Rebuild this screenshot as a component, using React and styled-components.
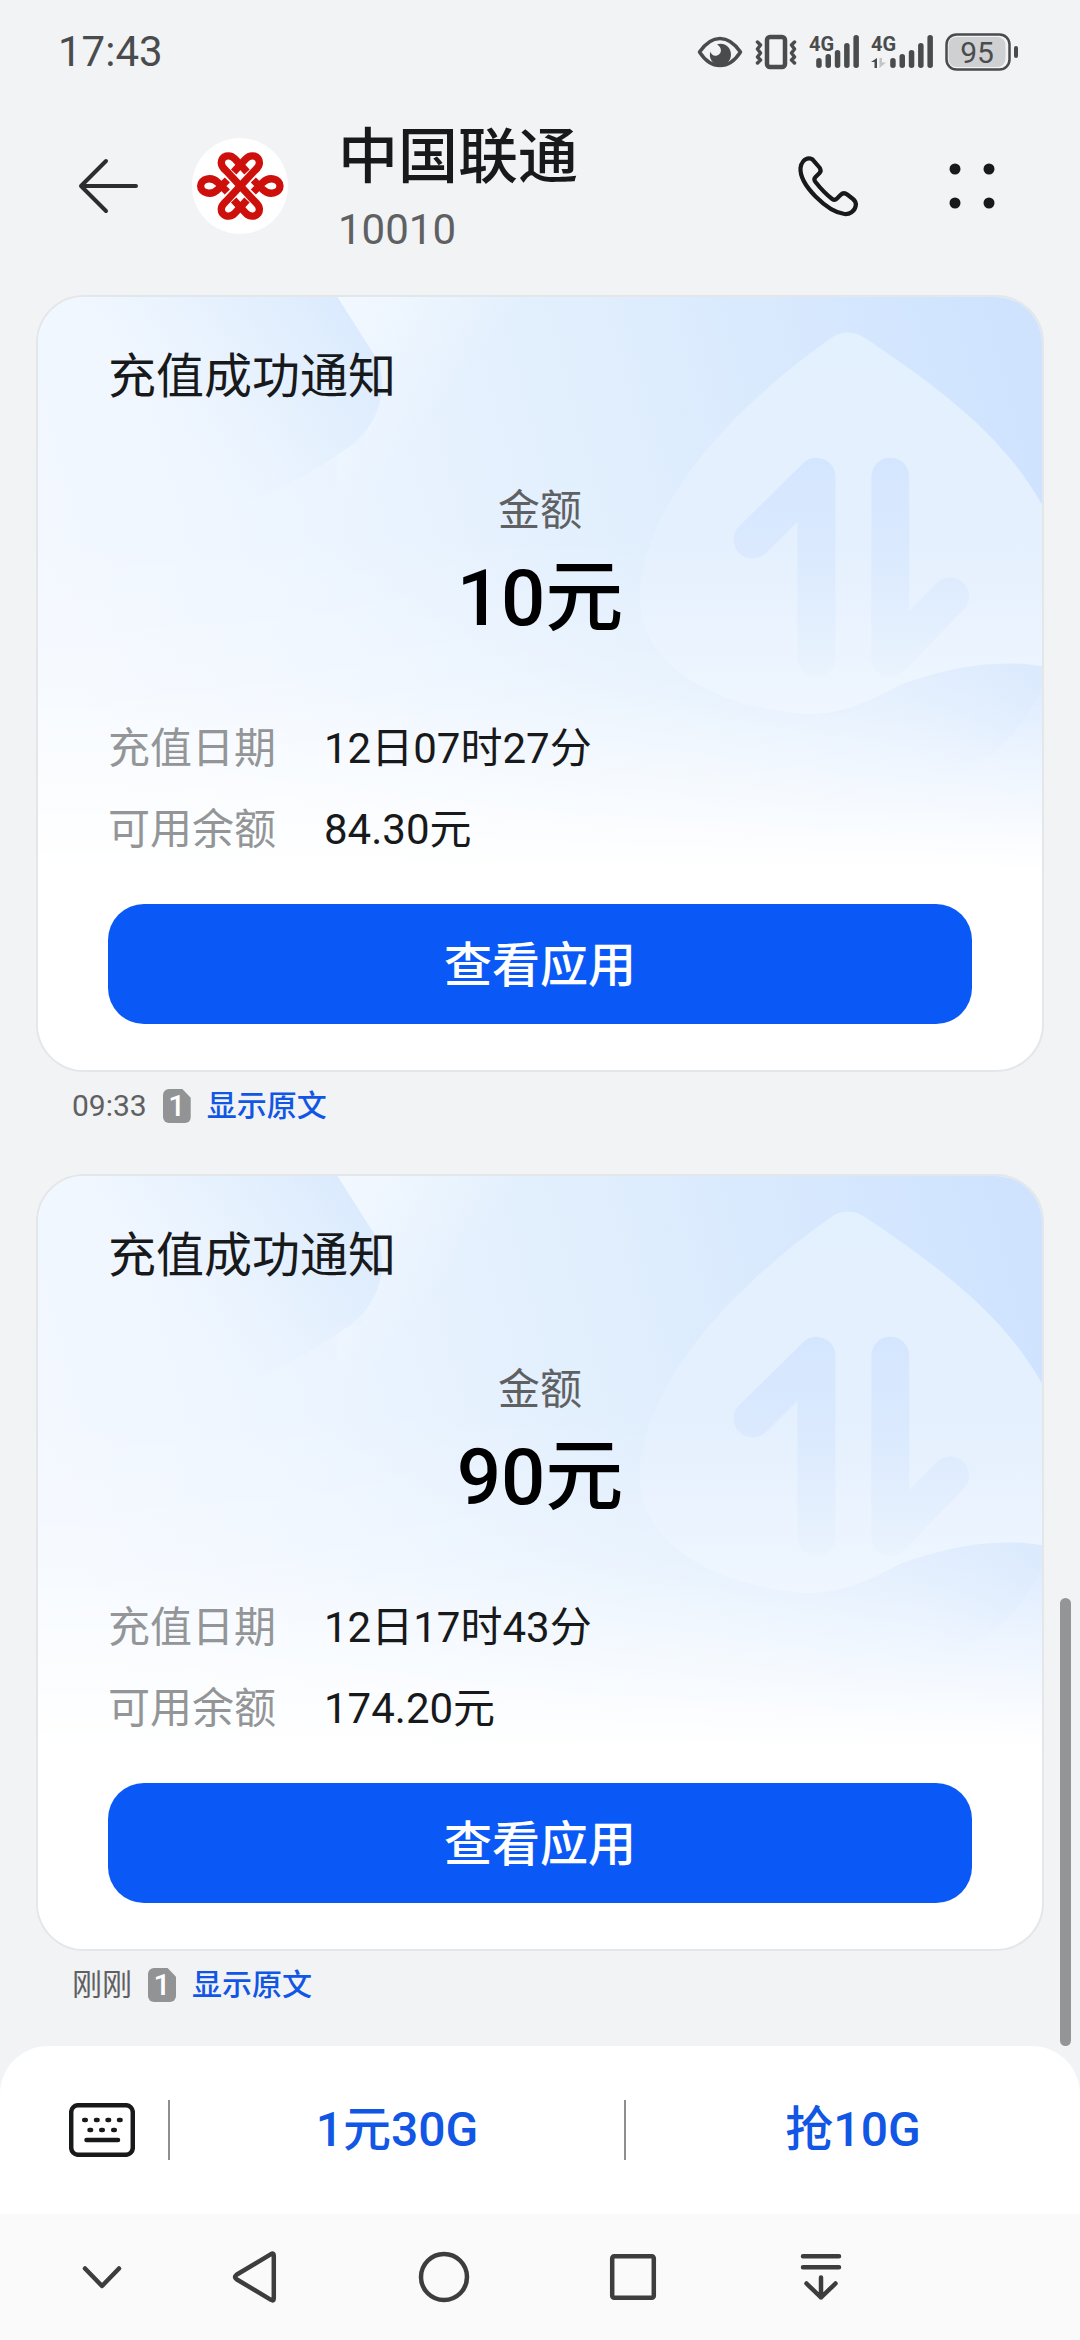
import React from "react";
import styled, { createGlobalStyle } from "styled-components";

const color = {
  page: "#f1f3f5",
  surface: "#ffffff",
  nav: "#fafafa",
  ink: "#18191b",
  status: "#4a4b4d",
  navInk: "#3d3d3d",
  muted: "#5f6062",
  label: "#939597",
  link: "#1156e4",
  brand: "#0a59f7",
};

const GlobalStyle = createGlobalStyle`
  * { box-sizing: border-box; }
  body {
    margin: 0;
    background: ${color.page};
    color: ${color.ink};
    font-family: Roboto, "Noto Sans CJK SC", sans-serif;
  }
  h1, p, dl, dd { margin: 0; }
  button {
    border: 0;
    padding: 0;
    background: none;
    color: inherit;
    font: inherit;
    cursor: pointer;
  }
  svg { display: block; }
`;

const Page = styled.div`
  display: flex;
  flex-direction: column;
  min-height: 100vh;
`;

const StatusBar = styled.div`
  display: flex;
  align-items: center;
  justify-content: space-between;
  height: 104px;
  padding: 0 62px 0 58px;
  color: ${color.status};
`;

const Clock = styled.time`
  font-size: 42px;
  line-height: 56px;
`;

const StatusIcons = styled.div`
  display: flex;
  align-items: center;
  gap: 12px;
`;

const Header = styled.header`
  display: flex;
  align-items: center;
  height: 164px;
  padding: 0 66px;
`;

const IconButton = styled.button`
  display: flex;
  align-items: center;
  justify-content: center;
  width: 84px;
  height: 84px;
`;

const Avatar = styled.div`
  width: 96px;
  height: 96px;
  margin: 0 50px 0 42px;
  border-radius: 50%;
  background: ${color.surface};
`;

const Contact = styled.div`
  flex: 1;
  padding-top: 8px;
`;

const ContactName = styled.h1`
  font-size: 60px;
  font-weight: 500;
  line-height: 80px;
`;

const ContactNumber = styled.p`
  font-size: 42px;
  line-height: 64px;
  color: ${color.muted};
`;

const HeaderActions = styled.div`
  display: flex;
  gap: 60px;
`;

const Thread = styled.main`
  position: relative;
  flex: 1;
  display: flex;
  flex-direction: column;
  gap: 48px;
  padding: 27px 36px 36px;
`;

const ScrollThumb = styled.div`
  position: absolute;
  right: 9px;
  bottom: 0;
  width: 11px;
  height: 448px;
  border-radius: 6px;
  background: #949597;
`;

const Card = styled.section`
  position: relative;
  overflow: hidden;
  padding: 48px 70px 46px;
  border: 2px solid #e4e7ea;
  border-radius: 48px;
  background: ${color.surface};
  background-clip: padding-box;
`;

const CardArt = styled.svg`
  position: absolute;
  top: 0;
  left: 0;
  width: 100%;
  height: auto;
`;

const CardBody = styled.div`
  position: relative;
`;

const CardTitle = styled.p`
  font-size: 48px;
  line-height: 64px;
`;

const Summary = styled.div`
  margin: 74px 0;
  text-align: center;
`;

const SummaryLabel = styled.p`
  font-size: 42px;
  line-height: 56px;
  color: ${color.muted};
`;

const Amount = styled.p`
  margin-top: 12px;
  font-size: 78px;
  font-weight: 500;
  line-height: 96px;
  color: #000;
`;

const Details = styled.dl`
  display: grid;
  grid-template-columns: auto 1fr;
  gap: 25px 48px;
  margin-bottom: 46px;
  font-size: 42px;
  line-height: 56px;
`;

const DetailLabel = styled.dt`
  color: ${color.label};
`;

const CardButton = styled.button`
  width: 100%;
  height: 120px;
  padding-bottom: 6px;
  border-radius: 36px;
  background: ${color.brand};
  color: #fff;
  font-size: 48px;
  font-weight: 500;
`;

const Meta = styled.div`
  display: flex;
  align-items: center;
  gap: 16px;
  height: 40px;
  margin-top: 14px;
  padding-left: 36px;
  font-size: 30px;
  line-height: 40px;
  color: ${color.muted};
`;

const SimBadge = styled.span`
  width: 28px;
  height: 34px;
  border-radius: 6px;
  background: #929395;
  clip-path: polygon(0 0, 70% 0, 100% 26%, 100% 100%, 0 100%);
  color: #fff;
  font-size: 30px;
  font-weight: 500;
  line-height: 34px;
  text-align: center;
`;

const OriginalLink = styled.a`
  color: ${color.link};
  font-weight: 500;
  text-decoration: none;
`;

const Composer = styled.div`
  display: flex;
  align-items: center;
  height: 168px;
  padding-left: 36px;
  border-radius: 48px 48px 0 0;
  background: ${color.surface};
`;

const KeyboardButton = styled(IconButton)`
  width: 132px;
`;

const QuickAction = styled.button`
  flex: 1;
  height: 60px;
  border-left: 2px solid #8f8f8f;
  color: ${color.link};
  font-size: 48px;
  font-weight: 500;
  line-height: 60px;
`;

const NavBar = styled.nav`
  display: flex;
  align-items: center;
  height: 126px;
  padding: 0 165px 0 42px;
  background: ${color.nav};
  color: ${color.navInk};
`;

const NavButton = styled.button`
  display: flex;
  align-items: center;
  justify-content: center;
  flex: ${(p) => (p.$fixed ? "0 0 120px" : "1")};
  height: 84px;
`;

function EyeIcon() {
  return (
    <svg width="46" height="36" viewBox="0 0 46 36" fill="none">
      <path d="M2.5 18C8 10 15 4.500 23 4.500S38 10 43.500 18C38 26.500 31 31.500 23 31.500S8 26.500 2.500 18Z" stroke="currentColor" strokeWidth="3.500" strokeLinejoin="round" />
      <path d="M20 10.500C27 8 34 13 34 20.500C34 27 29 31 23 31C16 31 11 24 13.500 17.500C14 20.500 17 22.500 20 21.500C25 20 25.500 13.500 20 10.500Z" fill="currentColor" />
    </svg>
  );
}

function VibrateIcon() {
  return (
    <svg width="42" height="36" viewBox="0 0 42 36" fill="none" stroke="currentColor" strokeLinecap="round" strokeLinejoin="round">
      <rect x="12" y="3" width="18" height="30" rx="3" strokeWidth="4.500" />
      <path d="M2.500 8L5.500 11L2.500 15L5.500 19L2.500 23L5.500 26L2.500 29M39.500 8L36.500 11L39.500 15L36.500 19L39.500 23L36.500 26L39.500 29" strokeWidth="3.500" />
    </svg>
  );
}

function SignalIcon({ data }) {
  const start = data ? 22 : 10;
  const tops = [24, 20, 16, 9, 1];
  const width = data ? 62 : 50;
  return (
    <svg width={width} height="48" viewBox={`0 -6 ${width} 48`} fill="currentColor">
      <text x="0" y="17" fontSize="20" fontWeight="700" fontFamily="Roboto, sans-serif">4G</text>
      {tops.map((top, i) => (
        <rect key={top} x={start + i * 9.3 - 2.8} y={top} width="5.500" height={34 - top} rx="2.700" />
      ))}
      {data && <path d="M0 28L6 24V34H3.500V28Z" />}
      {data && <path d="M8.500 24H11V28.500H15L8.500 34Z" fill="#c3c4c6" />}
    </svg>
  );
}

function BatteryIcon() {
  return (
    <svg width="73" height="38" viewBox="0 0 73 38">
      <rect x="1.500" y="1.500" width="63" height="35" rx="10" fill="#f1f3f5" stroke="currentColor" strokeWidth="2.500" />
      <rect x="3.500" y="4" width="57" height="30" rx="8" fill="#cfd0d2" />
      <rect x="69" y="13" width="4" height="12" rx="2" fill="currentColor" />
      <text x="32" y="30" fontSize="30" textAnchor="middle" fill="currentColor" fontFamily="Roboto, sans-serif">95</text>
    </svg>
  );
}

function BackIcon() {
  return (
    <svg width="60" height="58" viewBox="0 0 60 58" fill="none" stroke="#2c2d2f" strokeWidth="4" strokeLinecap="round" strokeLinejoin="round">
      <path d="M28 4L3 29L28 54M3 29H58" />
    </svg>
  );
}

function UnicomLogo() {
  const knot =
    "M201 126L165 87C150 71 122 76 124 100C125 112 134 118 140 124L222 212C228 218 237 224 238 236C240 260 212 265 197 249L161 210";
  const loop = "M142 186L114 158C94 138 62 146 62 168C62 190 94 198 114 178L142 150";
  return (
    <svg width="96" height="96" viewBox="36 24 288 288" fill="none" stroke="#ce100c" strokeWidth="22">
      <path d={knot} />
      <path d={knot} transform="matrix(-1 0 0 1 362 0)" />
      <path d={loop} />
      <path d={loop} transform="matrix(-1 0 0 1 362 0)" />
    </svg>
  );
}

function PhoneIcon() {
  return (
    <svg width="64" height="64" viewBox="0 0 64 64" fill="none" stroke="currentColor" strokeWidth="4.200" strokeLinejoin="round">
      <path d="M4.500 14C5 9 8.500 4.300 13 4.300C15 4.300 16.200 4.800 17.300 6.300L23.500 13.500C25 15.500 25 17.500 23.300 19.300L19.500 23C18 24.500 18 26 19.300 27.800C24.500 34.500 29.500 40 36.200 45C38 46.300 39.500 46 41 44.500L44.500 41C46.500 39 49 38.800 51.200 40.500L57 45C59.500 47 60.500 49 59.700 52C58.500 57.500 53.500 60.500 48.500 60C31 57.500 3.500 31 4.500 14Z" />
    </svg>
  );
}

function MoreIcon() {
  return (
    <svg width="48" height="48" viewBox="0 0 48 48" fill="currentColor">
      <circle cx="7" cy="7" r="5.500" />
      <circle cx="41" cy="7" r="5.500" />
      <circle cx="7" cy="41" r="5.500" />
      <circle cx="41" cy="41" r="5.500" />
    </svg>
  );
}

function KeyboardIcon() {
  return (
    <svg width="66" height="54" viewBox="0 0 66 54" fill="none" stroke="currentColor" strokeWidth="4.500" strokeLinecap="round">
      <rect x="2.200" y="2.200" width="61.600" height="49.600" rx="7" />
      <path d="M15.200 17H16.800M27 17H28.600M38.500 17H40.100M50 17H51.600M20.500 27H22.100M32.200 27H33.800M44.200 27H45.800M17.500 37H49" />
    </svg>
  );
}

const navShapes = {
  hide: <path d="M9 17.500L26 35L43 17.500" />,
  back: <path d="M43.800 4.800V47.200Q43.800 50.500 41 48.900L6.500 28.200Q3.500 26 6.500 23.800L41 3.100Q43.800 1.500 43.800 4.800Z" />,
  home: <circle cx="26" cy="26" r="23" />,
  recent: <rect x="5.200" y="5.200" width="41.600" height="41.600" rx="2" />,
  drawer: <path d="M8 5.200H44M8 16.200H44M26 26.500V46.500M11.500 32.500L26 46.500L40.500 32.500" />,
};

function NavIcon({ shape }) {
  return (
    <svg width="52" height="52" viewBox="0 0 52 52" fill="none" stroke="currentColor" strokeWidth="4.500" strokeLinecap="round" strokeLinejoin="round">
      {navShapes[shape]}
    </svg>
  );
}

function RechargeArt({ id }) {
  const ref = (name) => `url(#${id}-${name})`;
  return (
    <CardArt viewBox="0 0 1006 776" aria-hidden="true">
      <defs>
        <linearGradient id={`${id}-base`} gradientUnits="userSpaceOnUse" x1="0" y1="260" x2="960" y2="0">
          <stop offset="0" stopColor="#f3f8ff" />
          <stop offset="0.250" stopColor="#edf5ff" />
          <stop offset="0.600" stopColor="#e0eefd" />
          <stop offset="1" stopColor="#cfe3ff" />
        </linearGradient>
        <linearGradient id={`${id}-fade`} x1="0" y1="0" x2="0" y2="1">
          <stop offset="0" stopColor="#fff" stopOpacity="0" />
          <stop offset="0.300" stopColor="#fff" stopOpacity="0" />
          <stop offset="0.500" stopColor="#fff" stopOpacity="0.280" />
          <stop offset="0.620" stopColor="#fff" stopOpacity="0.650" />
          <stop offset="0.740" stopColor="#fff" />
        </linearGradient>
        <linearGradient id={`${id}-facet`} gradientUnits="userSpaceOnUse" x1="340" y1="40" x2="170" y2="170">
          <stop offset="0" stopColor="#daeafd" />
          <stop offset="1" stopColor="#e4f0fd" stopOpacity="0" />
        </linearGradient>
        <linearGradient id={`${id}-glow`} gradientUnits="userSpaceOnUse" x1="300" y1="0" x2="420" y2="90">
          <stop offset="0" stopColor="#f2f8ff" />
          <stop offset="1" stopColor="#f2f8ff" stopOpacity="0" />
        </linearGradient>
        <linearGradient id={`${id}-drop`} x1="0" y1="0" x2="0" y2="1">
          <stop offset="0" stopColor="#e3f0fe" />
          <stop offset="0.550" stopColor="#e5f0fe" />
          <stop offset="1" stopColor="#eff6ff" />
        </linearGradient>
        <linearGradient id={`${id}-arrow`} gradientUnits="userSpaceOnUse" x1="0" y1="160" x2="0" y2="390">
          <stop offset="0" stopColor="#d4e6fe" />
          <stop offset="0.400" stopColor="#dae9fe" />
          <stop offset="1" stopColor="#ebf4fe" />
        </linearGradient>
        <linearGradient id={`${id}-leaf`} gradientUnits="userSpaceOnUse" x1="990" y1="370" x2="900" y2="485">
          <stop offset="0" stopColor="#dbeafd" />
          <stop offset="1" stopColor="#ecf4ff" stopOpacity="0" />
        </linearGradient>
      </defs>
      <rect width="1006" height="776" fill={ref("base")} />
      <path d="M300 0H560V300H300V150H325L344 85Q344 68 335 55Z" fill={ref("glow")} />
      <path d="M0 0H300L335 55Q348 75 344 98Q340 128 312 150Q250 195 150 230H0Z" fill={ref("facet")} />
      <rect width="1006" height="776" fill={ref("fade")} />
      <path d="M790 407Q815 412 865 388Q940 358 1006 370V392C985 437 955 466 909 482C860 475 800 450 740 415Z" fill={ref("leaf")} />
      <path d="M796 40Q811 31 827 40C905 92 968 140 1006 208V370C958 362 910 372 865 388C830 407 805 418 768 418C690 412 603 375 603 302C603 220 680 122 796 40Z" fill={ref("drop")} />
      <path d="M716 243L780 180V362M854 180V362L914 300" fill="none" stroke={ref("arrow")} strokeWidth="38" strokeLinecap="round" strokeLinejoin="round" />
    </CardArt>
  );
}

function RechargeMessage({ id, amount, date, balance, time }) {
  return (
    <article>
      <Card>
        <RechargeArt id={id} />
        <CardBody>
          <CardTitle>充值成功通知</CardTitle>
          <Summary>
            <SummaryLabel>金额</SummaryLabel>
            <Amount>{amount}</Amount>
          </Summary>
          <Details>
            <DetailLabel>充值日期</DetailLabel>
            <dd>{date}</dd>
            <DetailLabel>可用余额</DetailLabel>
            <dd>{balance}</dd>
          </Details>
          <CardButton type="button">查看应用</CardButton>
        </CardBody>
      </Card>
      <Meta>
        <time>{time}</time>
        <SimBadge>1</SimBadge>
        <OriginalLink href={`#${id}`}>显示原文</OriginalLink>
      </Meta>
    </article>
  );
}

export default function App() {
  return (
    <Page lang="zh-CN">
      <GlobalStyle />
      <StatusBar>
        <Clock>17:43</Clock>
        <StatusIcons>
          <EyeIcon />
          <VibrateIcon />
          <SignalIcon />
          <SignalIcon data />
          <BatteryIcon />
        </StatusIcons>
      </StatusBar>
      <Header>
        <IconButton type="button" aria-label="返回"><BackIcon /></IconButton>
        <Avatar><UnicomLogo /></Avatar>
        <Contact>
          <ContactName>中国联通</ContactName>
          <ContactNumber>10010</ContactNumber>
        </Contact>
        <HeaderActions>
          <IconButton type="button" aria-label="拨打电话"><PhoneIcon /></IconButton>
          <IconButton type="button" aria-label="更多"><MoreIcon /></IconButton>
        </HeaderActions>
      </Header>
      <Thread>
        <RechargeMessage id="recharge-10" amount="10元" date="12日07时27分" balance="84.30元" time="09:33" />
        <RechargeMessage id="recharge-90" amount="90元" date="12日17时43分" balance="174.20元" time="刚刚" />
        <ScrollThumb />
      </Thread>
      <Composer>
        <KeyboardButton type="button" aria-label="键盘"><KeyboardIcon /></KeyboardButton>
        <QuickAction type="button">1元30G</QuickAction>
        <QuickAction type="button">抢10G</QuickAction>
      </Composer>
      <NavBar>
        <NavButton type="button" $fixed aria-label="隐藏导航栏"><NavIcon shape="hide" /></NavButton>
        <NavButton type="button" aria-label="返回上一页"><NavIcon shape="back" /></NavButton>
        <NavButton type="button" aria-label="主屏幕"><NavIcon shape="home" /></NavButton>
        <NavButton type="button" aria-label="最近任务"><NavIcon shape="recent" /></NavButton>
        <NavButton type="button" aria-label="通知面板"><NavIcon shape="drawer" /></NavButton>
      </NavBar>
    </Page>
  );
}
